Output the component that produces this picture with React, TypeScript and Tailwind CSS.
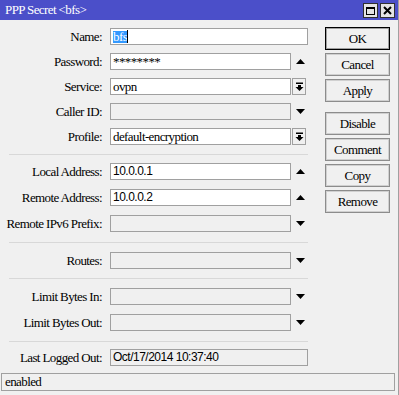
import React from "react";

const serif = { fontFamily: '"Liberation Serif", "Times New Roman", serif' };
const sans = { fontFamily: '"Liberation Sans", Arial, sans-serif' };

function Up() {
  return (
    <svg width="9" height="5" viewBox="0 0 9 5" className="ml-[5px]">
      <path d="M0 5 L4.5 0 L9 5 Z" fill="#000" />
    </svg>
  );
}
function Down() {
  return (
    <svg width="9" height="5" viewBox="0 0 9 5" className="ml-[5px]">
      <path d="M0 0 L9 0 L4.5 5 Z" fill="#000" />
    </svg>
  );
}
function BoxDown() {
  return (
    <div className="ml-[1px] w-[14px] h-[17px] border border-[#a0a0a0] bg-[#f0f0f0] flex items-center justify-center">
      <svg width="9" height="9" viewBox="0 0 9 9">
        <rect x="1" y="0.5" width="7" height="1.5" fill="#000" />
        <rect x="3" y="3" width="3" height="2" fill="#000" />
        <path d="M0.5 5 L8.5 5 L4.5 9 Z" fill="#000" />
      </svg>
    </div>
  );
}

type Kind = "none" | "up" | "down" | "box";

function Row({
  label,
  value,
  kind = "none",
  white = true,
  mono = false,
  className = "",
  children,
}: {
  label: string;
  value?: string;
  kind?: Kind;
  white?: boolean;
  mono?: boolean;
  className?: string;
  children?: React.ReactNode;
}) {
  const full = kind === "none";
  return (
    <div className={`flex items-center h-[17px] ${className}`}>
      <div
        className="w-[102px] text-right text-[13px] leading-[17px] tracking-[-0.6px] text-black whitespace-nowrap"
        style={serif}
      >
        {label}
      </div>
      <div className="ml-[8px] flex items-center">
        <div
          className={`${full ? "w-[198px]" : "w-[181px]"} h-[17px] border border-[#a0a0a0] ${
            white ? "bg-white" : "bg-[#f0f0f0]"
          } flex items-center pl-[2px] overflow-hidden whitespace-nowrap`}
        >
          {children ?? (
            <span
              className={
                mono
                  ? "text-[12px] leading-[15px] tracking-[-0.5px] text-black"
                  : "text-[13px] leading-[15px] tracking-[-0.6px] text-black"
              }
              style={mono ? sans : serif}
            >
              {value}
            </span>
          )}
        </div>
        {kind === "up" && <Up />}
        {kind === "down" && <Down />}
        {kind === "box" && <BoxDown />}
      </div>
    </div>
  );
}

function Sep({ className = "" }: { className?: string }) {
  return <div className={`ml-[9px] w-[299px] h-px bg-[#d8d8d8] ${className}`} />;
}

function Btn({ label, primary = false, className = "" }: { label: string; primary?: boolean; className?: string }) {
  return (
    <div
      className={`w-[65px] h-[23px] flex items-center justify-center border ${
        primary
          ? "border-black shadow-[inset_0_0_0_1px_#a0a0a0]"
          : "border-[#8c8c8c] shadow-[inset_0_0_0_1px_#d0d0d0]"
      } bg-[#f0f0f0] text-[13px] tracking-[-0.6px] text-black ${className}`}
      style={serif}
    >
      {label}
    </div>
  );
}

export default function App() {
  return (
    <div className="w-[399px] h-[395px] bg-[#f0f0f0] border-r border-[#a0a0a0] flex flex-col overflow-hidden">
      {/* Title bar */}
      <div className="h-[20px] bg-[#4b4fc9] flex items-center pl-[5px] pr-[3px]">
        <div className="text-white text-[13px] tracking-[-0.6px] leading-[20px]" style={serif}>
          PPP Secret &lt;bfs&gt;
        </div>
        <div className="ml-auto flex items-center gap-[2px] mt-[1px]">
          <div className="w-[15px] h-[15px] bg-[#e4e4e4] border border-[#303030] flex items-center justify-center">
            <div className="w-[9px] h-[8px] border border-black border-t-2" />
          </div>
          <div className="w-[15px] h-[15px] bg-[#e4e4e4] border border-[#303030] flex items-center justify-center">
            <svg width="9" height="9" viewBox="0 0 9 9">
              <path d="M1 1 L8 8 M8 1 L1 8" stroke="#000" strokeWidth="2" />
            </svg>
          </div>
        </div>
      </div>

      {/* Body */}
      <div className="flex">
        <div className="w-[315px] pt-[8px] flex flex-col">
          <Row label="Name:">
            <span className="flex items-center h-[12px] bg-[#3399ff] text-white text-[13px] leading-[12px] tracking-[-0.6px]" style={serif}>
              bfs
            </span>
            <span className="w-px h-[13px] bg-black" />
          </Row>
          <Row label="Password:" value="********" kind="up" className="mt-[8px]" />
          <Row label="Service:" value="ovpn" kind="box" className="mt-[8px]" />
          <Row label="Caller ID:" value="" kind="down" white={false} className="mt-[8px]" />
          <Row label="Profile:" value="default-encryption" kind="box" className="mt-[8px]" />
          <Sep className="mt-[9px]" />
          <Row label="Local Address:" value="10.0.0.1" kind="up" mono className="mt-[8px]" />
          <Row label="Remote Address:" value="10.0.0.2" kind="up" mono className="mt-[9px]" />
          <Row label="Remote IPv6 Prefix:" value="" kind="down" white={false} className="mt-[9px]" />
          <Sep className="mt-[10px]" />
          <Row label="Routes:" value="" kind="down" white={false} className="mt-[9px]" />
          <Sep className="mt-[9px]" />
          <Row label="Limit Bytes In:" value="" kind="down" white={false} className="mt-[9px]" />
          <Row label="Limit Bytes Out:" value="" kind="down" white={false} className="mt-[9px]" />
          <Sep className="mt-[10px]" />
          <Row label="Last Logged Out:" value="Oct/17/2014 10:37:40" white={false} mono className="mt-[7px]" />
        </div>
        <div className="ml-[10px] pt-[7px] flex flex-col">
          <Btn label="OK" primary />
          <Btn label="Cancel" className="mt-[3px]" />
          <Btn label="Apply" className="mt-[3px]" />
          <Btn label="Disable" className="mt-[10px]" />
          <Btn label="Comment" className="mt-[3px]" />
          <Btn label="Copy" className="mt-[3px]" />
          <Btn label="Remove" className="mt-[3px]" />
        </div>
      </div>

      {/* Status bar */}
      <div className="mt-[7px] ml-[1px] w-[394px] h-[18px] border border-[#a0a0a0] flex items-center pl-[3px]">
        <span className="text-[13px] tracking-[-0.6px] text-black leading-[16px]" style={serif}>
          enabled
        </span>
      </div>
    </div>
  );
}
